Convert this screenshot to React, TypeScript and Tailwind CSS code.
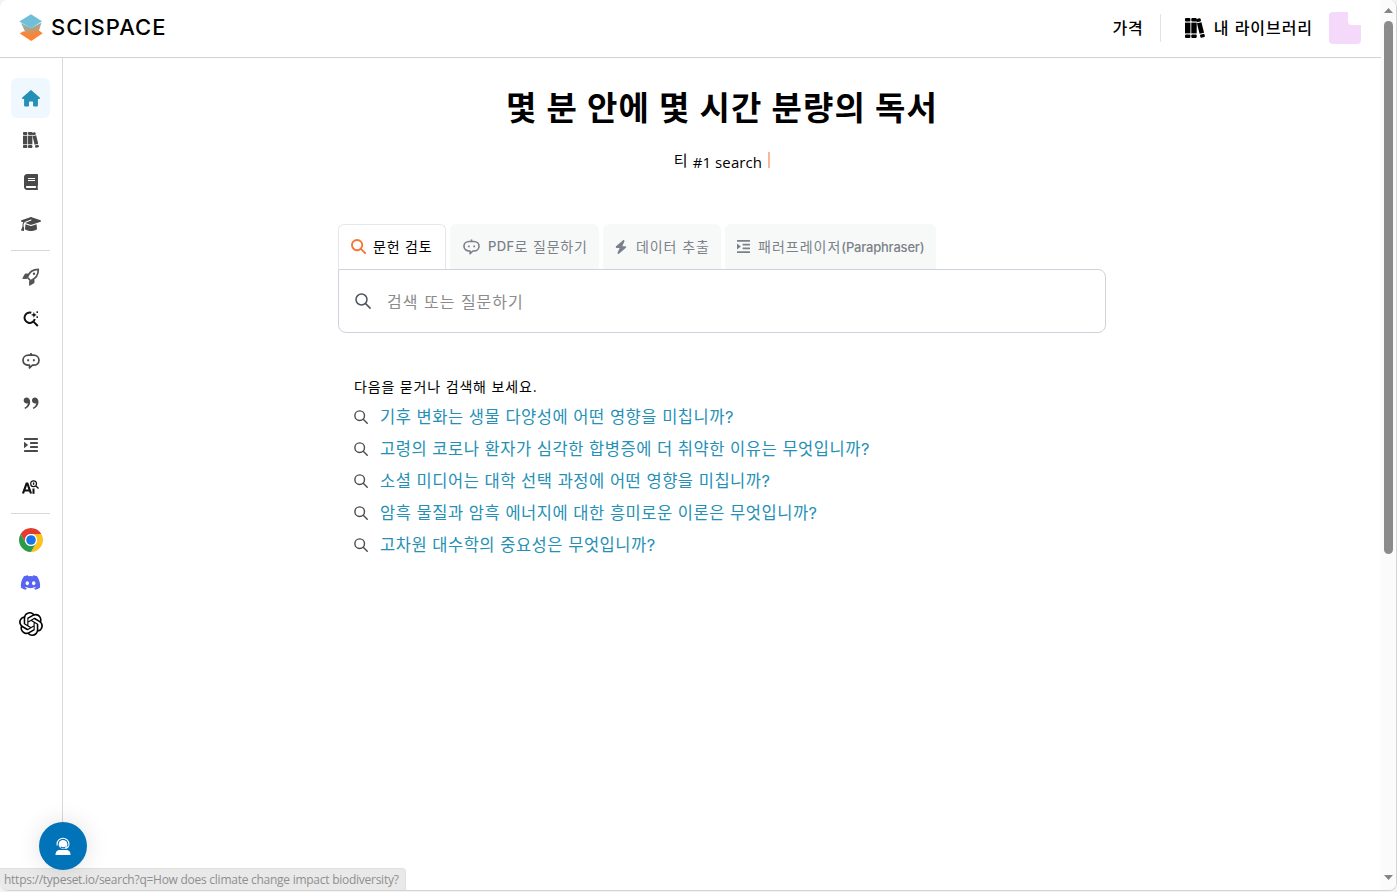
import type { ReactNode } from "react";
import { FaBook, FaDiscord } from "react-icons/fa";
import { FaBolt, FaGraduationCap } from "react-icons/fa6";
import { RiDoubleQuotesR } from "react-icons/ri";
import { SiOpenai } from "react-icons/si";

type IconProps = { className?: string };

const SUGGESTIONS = [
  "기후 변화는 생물 다양성에 어떤 영향을 미칩니까?",
  "고령의 코로나 환자가 심각한 합병증에 더 취약한 이유는 무엇입니까?",
  "소셜 미디어는 대학 선택 과정에 어떤 영향을 미칩니까?",
  "암흑 물질과 암흑 에너지에 대한 흥미로운 이론은 무엇입니까?",
  "고차원 대수학의 중요성은 무엇입니까?",
];

function LogoMark() {
  return (
    <svg width="24" height="27" viewBox="0 0 24 27">
      <defs>
        <linearGradient id="fold" x1="0.3" y1="0" x2="0.6" y2="1">
          <stop offset="0.2" stopColor="#8fb0ae" />
          <stop offset="0.9" stopColor="#ff8230" />
        </linearGradient>
      </defs>
      <path d="M0.800 19.500 4 17.500 20 16.500 23.700 19.200 12.300 27z" fill="#ff8230" />
      <path d="M2 9 12 14l10.500-5.500-2.500 8 1.500 2.200-9 4.800-6-5z" fill="url(#fold)" />
      <path d="M0.300 7.500 12 0.200l11 7.100L12 14.300z" fill="#6fbfd8" />
    </svg>
  );
}

function HomeIcon() {
  return (
    <svg width="18" height="17" viewBox="0 0 18 17" fill="#2490b5">
      <path d="M8.3.4a1 1 0 0 1 1.4 0l8 7.2c.6.6.2 1.5-.6 1.5h-1.2v6.1c0 .8-.5 1.3-1.2 1.3h-2.5c-.7 0-1.1-.4-1.1-1.1v-3c0-.6-.4-1-1-1H8c-.6 0-1 .4-1 1v3c0 .7-.4 1.100-1.100 1.100H3.300c-.7 0-1.200-.5-1.200-1.300V9.100H.9C.1 9.100-.3 8.200.3 7.600z" />
    </svg>
  );
}

function BooksIcon({ className }: IconProps) {
  return (
    <svg className={className} viewBox="0 0 20 20" fill="currentColor">
      <rect x="0" y="0" width="5.400" height="3.600" rx="1" />
      <rect x="0" y="4.600" width="5.400" height="10.800" />
      <rect x="0" y="16.400" width="5.400" height="3.600" rx="1" />
      <rect x="6.300" y="0" width="5.400" height="3.600" rx="1" />
      <rect x="6.300" y="4.600" width="5.400" height="10.800" />
      <rect x="6.300" y="16.400" width="5.400" height="3.600" rx="1" />
      <g transform="rotate(-14 15.500 10)">
        <rect x="13.200" y="0.300" width="4.600" height="3.300" rx="1" />
        <rect x="13.200" y="4.600" width="4.600" height="10.800" />
        <rect x="13.200" y="16.400" width="4.600" height="3.300" rx="1" />
      </g>
    </svg>
  );
}

function RocketIcon() {
  return (
    <svg width="18" height="18" viewBox="0 0 18 18" fill="none" stroke="#555" strokeWidth="1.700" strokeLinejoin="round">
      <path d="M5.300 9.200C7 4.500 10.500 1.300 16.300 1.300c.2 5.800-2.700 9.400-7.700 11.500z" />
      <path d="M6.500 6H3.300L.8 10.400h4zM12 11.500v3.300L7.600 17.300v-4z" fill="#555" strokeWidth="1" />
      <circle cx="12" cy="5.800" r="1.200" fill="#555" stroke="none" />
    </svg>
  );
}

function SparkSearchIcon() {
  return (
    <svg width="16" height="16" viewBox="0 0 16 16" fill="none" stroke="#111" strokeWidth="2">
      <path d="M8.300 1.700a5.200 5.200 0 1 0 3.500 6.300M10.200 10.400l4.600 4.600" />
      <path d="M10.900 1l.8 2.100 2.100.8-2.100.8-.8 2.100-.8-2.100L8 3.900l2.100-.8z" fill="#111" stroke="none" />
      <path d="M14.200.2v1.700M14.200 5.200v1.700" strokeWidth="1.400" />
    </svg>
  );
}

function BotIcon({ className }: IconProps) {
  return (
    <svg className={className} viewBox="0 0 18 16" fill="none" stroke="currentColor" strokeWidth="1.700" strokeLinejoin="round">
      <path d="M6.500 2.200h5c3.200 0 5.500 2 5.500 5s-2.300 5-5.500 5h-1L7.500 15v-2.800h-1C3.300 12.200 1 10.200 1 7.200s2.300-5 5.500-5z" />
      <path d="M9 0v2.200" />
      <path d="M5.200 7.300h1.900M10.900 7.300h1.900" strokeWidth="1.900" />
    </svg>
  );
}

function IndentIcon({ className }: IconProps) {
  return (
    <svg className={className} viewBox="0 0 14 14" fill="currentColor">
      <rect width="14" height="1.900" rx=".4" />
      <rect x="6" y="4" width="8" height="1.900" rx=".4" />
      <rect x="6" y="8" width="8" height="1.900" rx=".4" />
      <rect y="12.100" width="14" height="1.900" rx=".4" />
      <path d="M0 3.700 4.200 7 0 10.200z" />
    </svg>
  );
}

// "Ai" with a small magnifier in place of the dot
function DetectorIcon() {
  return (
    <svg width="17" height="14" viewBox="0 0 17 14" fill="none" stroke="#111">
      <path d="M1 13.500 4.600 3.500h.8L9 13.500M2.600 10.500h4.800" strokeWidth="2.200" />
      <path d="M11.500 8.500v5.300" strokeWidth="2" />
      <circle cx="11.600" cy="3.700" r="2.900" strokeWidth="1.200" />
      <path d="m13.700 5.800 2.800 2.600M11.600 2.600v2.200" strokeWidth="1.400" />
    </svg>
  );
}

function ChromeIcon() {
  return (
    <svg width="24" height="24" viewBox="0 0 48 48">
      <circle cx="24" cy="24" r="24" fill="#fff" />
      <path d="M3.220 12A24 24 0 0 1 44.780 12H24A12 12 0 0 0 13.610 30z" fill="#e33b2e" />
      <path d="M44.780 12A24 24 0 0 1 24 48L34.390 30A12 12 0 0 0 24 12z" fill="#fcc31e" />
      <path d="M24 48A24 24 0 0 1 3.220 12L13.610 30A12 12 0 0 0 34.390 30z" fill="#2a9b48" />
      <circle cx="24" cy="24" r="12" fill="#fff" />
      <circle cx="24" cy="24" r="9.600" fill="#1a73e8" />
    </svg>
  );
}

function SearchIcon({ className }: IconProps) {
  return (
    <svg className={className} viewBox="0 0 16 16" fill="none" stroke="currentColor" strokeLinecap="round">
      <circle cx="6.500" cy="6.500" r="5.500" />
      <path d="m10.600 10.600 4.500 4.500" />
    </svg>
  );
}

function SupportIcon() {
  return (
    <svg width="16" height="19" viewBox="0 0 17 19" fill="none" stroke="#fff">
      <path d="M2.200 8.500V7a6.300 6.300 0 0 1 12.600 0v1.500" strokeWidth="1.200" />
      <circle cx="8.500" cy="7.300" r="4.600" fill="#fff" stroke="none" />
      <path d="M6 9.800c1.500 1.600 3.800 1 5.500.2" stroke="#0073b9" strokeWidth="1.200" />
      <path d="M14.500 8.500c-.5 2.200-2 2.800-4 2.800" strokeWidth="1.300" />
      <path d="M.5 18.600c0-3.800 2-5.300 4.500-5.300h7c2.500 0 4.500 1.500 4.500 5.300z" fill="#fff" stroke="none" />
    </svg>
  );
}

function SideItem({ active, children }: { active?: boolean; children: ReactNode }) {
  return (
    <a
      className={`flex h-10 w-[39px] items-center justify-center rounded-md text-[#4a4a4a] ${active ? "bg-[#eff8ff]" : ""}`}
    >
      {children}
    </a>
  );
}

function Tab({ icon, active, width, children }: { icon: ReactNode; active?: boolean; width: string; children: ReactNode }) {
  return (
    <button
      className={`flex h-[45px] items-center rounded-t-md border border-b-0 pb-0.5 pl-3 text-[14px] whitespace-nowrap ${width} ${
        active ? "border-[#e5e7eb] bg-white text-black" : "border-[#f7f9f9] bg-[#f7f9f9] text-[#7b8188]"
      }`}
    >
      {icon}
      {children}
    </button>
  );
}

function Header() {
  return (
    <header className="flex h-[58px] shrink-0 items-center border-b border-[#d1d1d1] pr-5 pl-[19px]">
      <div className="flex items-center gap-2 pb-[3px]">
        <LogoMark />
        <span className="font-['Inter'] text-[22px] leading-6 font-medium tracking-[1.05px] text-black">SCISPACE</span>
      </div>
      <nav className="ml-auto flex items-center pb-px text-[16px] font-medium text-black">
        <span className="tracking-[0.9px]">가격</span>
        <span className="mr-6 ml-4 h-7 w-px bg-[#e2e2e2]" />
        <BooksIcon className="mr-[9px] h-5 w-5" />
        <span className="mr-4 tracking-[0.95px]">내 라이브러리</span>
        <span className="relative h-8 w-8 rounded bg-[#f4d9fb]">
          <span className="absolute top-0 right-0 h-[13px] w-[13px] rounded-bl bg-white" />
        </span>
      </nav>
    </header>
  );
}

function Sidebar() {
  return (
    <aside className="flex w-[63px] shrink-0 flex-col items-center gap-0.5 border-r border-[#d9d9d9] pt-5 pr-px">
      <SideItem active><HomeIcon /></SideItem>
      <SideItem><BooksIcon className="h-4 w-4" /></SideItem>
      <SideItem><FaBook size={16} /></SideItem>
      <SideItem><FaGraduationCap size={20} /></SideItem>
      <div className="mt-1 mb-1 h-px w-[39px] bg-[#d9d9d9]" />
      <SideItem><RocketIcon /></SideItem>
      <SideItem><SparkSearchIcon /></SideItem>
      <SideItem><BotIcon className="h-4 w-[18px]" /></SideItem>
      <SideItem><RiDoubleQuotesR size={20} /></SideItem>
      <SideItem><IndentIcon className="h-3.5 w-3.5" /></SideItem>
      <SideItem><DetectorIcon /></SideItem>
      <div className="mt-1 mb-1 h-px w-[39px] bg-[#d9d9d9]" />
      <SideItem><ChromeIcon /></SideItem>
      <SideItem><FaDiscord size={21} color="#5865f2" /></SideItem>
      <SideItem><SiOpenai size={24} color="#000" /></SideItem>
    </aside>
  );
}

function Hero() {
  return (
    <main className="flex flex-1 flex-col items-center">
      <h1 className="mt-[26px] h-12 text-[33px] leading-[48px] font-bold tracking-[1.15px] whitespace-nowrap text-black">
        몇 분 안에 몇 시간 분량의 독서
      </h1>
      <div className="mt-[18px] flex h-6 items-center text-[15px] text-black">
        <span className="pb-px">티</span>
        <span className="ml-[5px] pt-px font-['Open_Sans'] tracking-[0.1px]">#1 search</span>
        <span className="mb-1 ml-1.5 h-4 w-[2px] bg-[#f9b795]" />
      </div>

      <div className="mt-[50px] w-[768px]">
        <div className="flex gap-1">
          <Tab active width="w-[108px]" icon={<SearchIcon className="mr-[7px] h-[15px] w-[15px] stroke-2 text-[#f97430]" />}>
            <span className="tracking-[0.8px]">문헌 검토</span>
          </Tab>
          <Tab width="w-[149px]" icon={<BotIcon className="mt-0.5 mr-2 h-4 w-[17px]" />}>
            <span className="pt-0.5 text-[13px] font-medium tracking-[0.4px]">PDF</span>
            <span className="tracking-[0.8px]">로 질문하기</span>
          </Tab>
          <Tab width="w-[118px]" icon={<FaBolt size={14} className="mt-0.5 mr-2 -ml-0.5" />}>
            <span className="tracking-[0.9px]">데이터 추출</span>
          </Tab>
          <Tab width="w-[211px]" icon={<IndentIcon className="mt-px mr-2 -ml-px h-[13px] w-[13px]" />}>
            <span className="tracking-[1px]">패러프레이저</span>
            <span className="pt-1 text-[13px] font-medium tracking-[-0.2px]">(Paraphraser)</span>
          </Tab>
        </div>
        <div className="flex h-16 items-center rounded-tr-lg rounded-b-lg border border-[#cfd2da] pl-4">
          <SearchIcon className="h-4 w-4 stroke-[1.5] text-[#4b5563]" />
          <span className="ml-4 pt-0.5 text-[16px] tracking-[1px] text-[#8b8b8b]">검색 또는 질문하기</span>
        </div>

        <section className="mt-11 pl-4">
          <p className="mb-1 h-5 text-[14px] leading-5 tracking-[0.82px] text-black">다음을 묻거나 검색해 보세요.</p>
          <ul>
            {SUGGESTIONS.map((text) => (
              <li key={text} className="flex h-8 items-center">
                <SearchIcon className="mb-px h-3.5 w-3.5 stroke-[1.6] text-[#4a4a4a]" />
                <a className="ml-3 text-[16.5px] tracking-[0.52px] whitespace-nowrap text-[#2490b5]">{text}</a>
              </li>
            ))}
          </ul>
        </section>
      </div>
    </main>
  );
}

function Scrollbar() {
  return (
    <div className="flex w-[15px] shrink-0 flex-col items-center bg-[#fbfbfb] pt-2 pb-[10px]">
      <svg width="9" height="5" viewBox="0 0 9 5" fill="#858585"><path d="M0 5 4.500 0 9 5z" /></svg>
      <div className="mt-2 h-[533px] w-[9px] rounded-full bg-[#8b8b8b]" />
      <svg className="mt-auto" width="9" height="5" viewBox="0 0 9 5" fill="#858585"><path d="M0 0h9L4.500 5z" /></svg>
    </div>
  );
}

export default function App() {
  return (
    <div className="h-[892px] w-[1397px] overflow-hidden bg-[#f3f3f3] font-['Inter','Noto_Sans_CJK_KR',sans-serif]">
      <div className="relative flex h-[891px] w-[1397px] overflow-hidden rounded-lg border-r border-b border-[#d4d4d4] bg-white">
        <div className="flex min-w-0 flex-1 flex-col">
          <Header />
          <div className="flex flex-1">
            <Sidebar />
            <Hero />
          </div>
        </div>
        <Scrollbar />

        <div className="absolute bottom-0 left-0 flex h-[22px] w-[406px] items-center rounded-tr border-t border-r border-[#e0e0e0] bg-[#e9e9e9] pl-1 font-['Open_Sans'] text-[12px] tracking-[-0.26px] whitespace-nowrap text-[#8f8f8f]">
          https://typeset.io/search?q=How does climate change impact biodiversity?
        </div>
        <button className="absolute top-[822px] left-[39px] flex h-12 w-12 items-center justify-center rounded-full bg-[#0073b9] shadow-[0_0_24px_rgba(0,0,0,0.12)]">
          <SupportIcon />
        </button>
      </div>
    </div>
  );
}
